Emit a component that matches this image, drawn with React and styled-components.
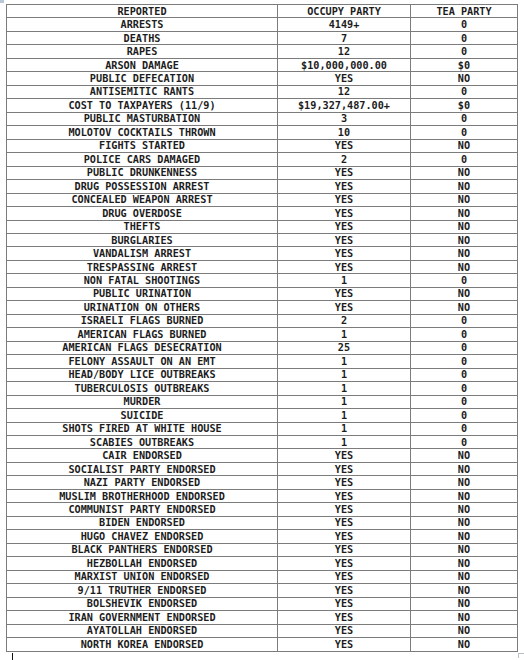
import React from "react";
import styled, { createGlobalStyle } from "styled-components";

const Global = createGlobalStyle`
  html, body { margin: 0; padding: 0; background: #ffffff; }
  body { width: 524px; height: 660px; overflow: hidden; position: relative; }
`;

const Page = styled.div`
  position: relative;
  width: 524px;
  height: 660px;
  padding: 4px 0 0 6px;
  box-sizing: border-box;
`;

const Table = styled.div`
  width: 512px;
  box-sizing: border-box;
  border: 1px solid #7c7c7c;
  border-bottom: none;
`;

const Row = styled.div`
  display: grid;
  grid-template-columns: 271px 133px 1fr;
  height: 13.48px;
  box-sizing: border-box;
  border-bottom: 1px solid #7c7c7c;
`;

const Cell = styled.div`
  display: flex;
  align-items: center;
  justify-content: center;
  box-sizing: border-box;
  border-right: ${(p) => (p.$last ? "none" : "1px solid #7c7c7c")};
  font-family: "DejaVu Sans Mono", "Liberation Mono", monospace;
  font-weight: bold;
  font-size: 10.2px;
  line-height: 1;
  color: #1c1c1c;
  white-space: nowrap;
  padding-top: 1px;
`;

const CornerIcon = styled.div`
  position: absolute;
  left: 0;
  top: 0;
  width: 4px;
  height: 3px;
  background: #b9c7d8;
`;

const Tick = styled.div`
  position: absolute;
  left: 12px;
  top: 653px;
  width: 1px;
  height: 7px;
  background: #111;
`;

const Handle = styled.div`
  position: absolute;
  left: 518px;
  top: 653px;
  width: 6px;
  height: 4px;
  border-top: 1px solid #b8c0c8;
  border-left: 1px solid #b8c0c8;
`;

const rows = [
  ["REPORTED", "OCCUPY PARTY", "TEA PARTY"],
  ["ARRESTS", "4149+", "0"],
  ["DEATHS", "7", "0"],
  ["RAPES", "12", "0"],
  ["ARSON DAMAGE", "$10,000,000.00", "$0"],
  ["PUBLIC DEFECATION", "YES", "NO"],
  ["ANTISEMITIC RANTS", "12", "0"],
  ["COST TO TAXPAYERS (11/9)", "$19,327,487.00+", "$0"],
  ["PUBLIC MASTURBATION", "3", "0"],
  ["MOLOTOV COCKTAILS THROWN", "10", "0"],
  ["FIGHTS STARTED", "YES", "NO"],
  ["POLICE CARS DAMAGED", "2", "0"],
  ["PUBLIC DRUNKENNESS", "YES", "NO"],
  ["DRUG POSSESSION ARREST", "YES", "NO"],
  ["CONCEALED WEAPON ARREST", "YES", "NO"],
  ["DRUG OVERDOSE", "YES", "NO"],
  ["THEFTS", "YES", "NO"],
  ["BURGLARIES", "YES", "NO"],
  ["VANDALISM ARREST", "YES", "NO"],
  ["TRESPASSING ARREST", "YES", "NO"],
  ["NON FATAL SHOOTINGS", "1", "0"],
  ["PUBLIC URINATION", "YES", "NO"],
  ["URINATION ON OTHERS", "YES", "NO"],
  ["ISRAELI FLAGS BURNED", "2", "0"],
  ["AMERICAN FLAGS BURNED", "1", "0"],
  ["AMERICAN FLAGS DESECRATION", "25", "0"],
  ["FELONY ASSAULT ON AN EMT", "1", "0"],
  ["HEAD/BODY LICE OUTBREAKS", "1", "0"],
  ["TUBERCULOSIS OUTBREAKS", "1", "0"],
  ["MURDER", "1", "0"],
  ["SUICIDE", "1", "0"],
  ["SHOTS FIRED AT WHITE HOUSE", "1", "0"],
  ["SCABIES OUTBREAKS", "1", "0"],
  ["CAIR ENDORSED", "YES", "NO"],
  ["SOCIALIST PARTY ENDORSED", "YES", "NO"],
  ["NAZI PARTY ENDORSED", "YES", "NO"],
  ["MUSLIM BROTHERHOOD ENDORSED", "YES", "NO"],
  ["COMMUNIST PARTY ENDORSED", "YES", "NO"],
  ["BIDEN ENDORSED", "YES", "NO"],
  ["HUGO CHAVEZ ENDORSED", "YES", "NO"],
  ["BLACK PANTHERS ENDORSED", "YES", "NO"],
  ["HEZBOLLAH ENDORSED", "YES", "NO"],
  ["MARXIST UNION ENDORSED", "YES", "NO"],
  ["9/11 TRUTHER ENDORSED", "YES", "NO"],
  ["BOLSHEVIK ENDORSED", "YES", "NO"],
  ["IRAN GOVERNMENT ENDORSED", "YES", "NO"],
  ["AYATOLLAH ENDORSED", "YES", "NO"],
  ["NORTH KOREA ENDORSED", "YES", "NO"],
];

export default function App() {
  return (
    <>
      <Global />
      <Page>
        <CornerIcon />
        <Table>
          {rows.map((r, i) => (
            <Row key={i}>
              <Cell>{r[0]}</Cell>
              <Cell>{r[1]}</Cell>
              <Cell $last>{r[2]}</Cell>
            </Row>
          ))}
        </Table>
        <Tick />
        <Handle />
      </Page>
    </>
  );
}
